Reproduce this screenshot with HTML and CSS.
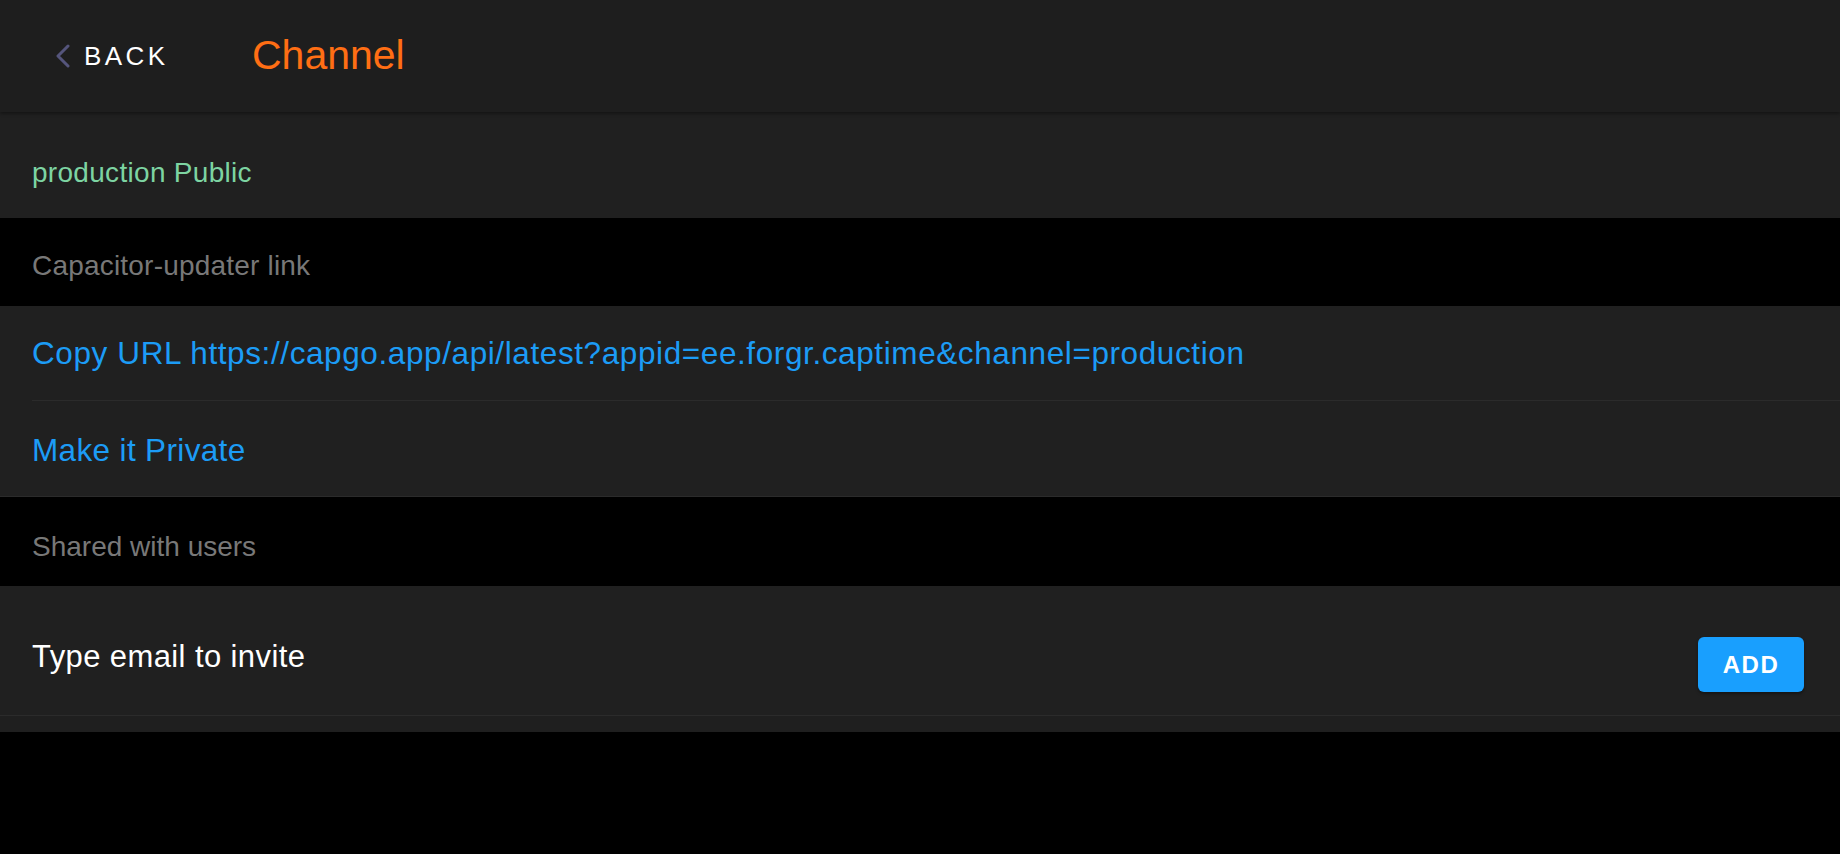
FILE: index.html
```html
<!DOCTYPE html>
<html lang="en">
<head>
<meta charset="utf-8">
<title>Channel</title>
<link rel="stylesheet" href="styles.css">
</head>
<body>
<header class="toolbar">
  <a class="back" href="#">
    <svg class="chev" width="16" height="24" viewBox="0 0 16 24"><path d="M13 2 L3 12 L13 22" fill="none" stroke="#55557c" stroke-width="3" stroke-linecap="round" stroke-linejoin="round"/></svg>
    <span class="back-text">BACK</span>
  </a>
  <h1 class="title">Channel</h1>
</header>
<main class="content">
  <div class="item item-status"><span class="status">production Public</span></div>
  <div class="label">Capacitor-updater link</div>
  <div class="list">
    <div class="item item-link inset"><span class="link link-url">Copy URL https://capgo.app/api/latest?appid=ee.forgr.captime&amp;channel=production</span></div>
    <div class="item item-link item-private full"><span class="link link-private">Make it Private</span></div>
  </div>
  <div class="label label-shared">Shared with users</div>
  <div class="list list-last">
    <div class="item item-input full">
      <span class="placeholder">Type email to invite</span>
      <button class="add">ADD</button>
    </div>
  </div>
</main>
</body>
</html>
```
FILE: styles.css
```css
html, body {
  margin: 0;
  padding: 0;
  background: #000;
  font-family: "Liberation Sans", Arial, sans-serif;
}
.toolbar {
  height: 112px;
  background: #1e1e1e;
  display: flex;
  align-items: center;
  box-shadow: 0 2px 3px rgba(0,0,0,0.35);
  position: relative;
  z-index: 1;
}
.back {
  display: flex;
  align-items: center;
  text-decoration: none;
  margin-left: 55px;
  width: 197px;
}
.chev { display: block; margin-right: 13px; }
.back-text {
  color: #fff;
  font-size: 26px;
  letter-spacing: 3.4px;
}
.title {
  margin: 0;
  color: #ff6e14;
  font-size: 41px;
  font-weight: normal;
  padding-bottom: 1px;
}
.content { background: #000; }
.item {
  background: #202020;
  display: flex;
  align-items: center;
  padding-left: 32px;
  box-sizing: border-box;
}
.item-status {
  height: 106px;
  padding-top: 16px;
}
.status { color: #7dd4a2; font-size: 28px; letter-spacing: 0.3px; }
.label {
  height: 88px;
  display: flex;
  align-items: center;
  padding-left: 32px;
  padding-top: 8px;
  box-sizing: border-box;
  color: #787878;
  font-size: 28px;
  letter-spacing: 0.2px;
}
.label-shared { height: 89px; padding-top: 10px; letter-spacing: 0; }
.list { background: #202020; }
.item-link { height: 95px; }
.item-private { height: 96px; padding-top: 3px; }
.link { color: #1c9cf6; font-size: 31.5px; }
.link-url { letter-spacing: 0.6px; }
.link-private { letter-spacing: 0.35px; }
.inset {
  background: #202020;
  position: relative;
}
.inset::after {
  content: "";
  position: absolute;
  left: 32px;
  right: 0;
  bottom: 0;
  height: 1px;
  background: #2b2b2b;
}
.full { border-bottom: 1px solid #2b2b2b; }
.list-last { padding-bottom: 16px; background: #1f1f1f; }
.item-input {
  height: 130px;
  justify-content: space-between;
  padding-right: 36px;
  padding-top: 12px;
}
.placeholder { color: #fff; font-size: 31px; letter-spacing: 0.4px; margin-top: 2px; margin-bottom: 2px; }
.add {
  width: 106px;
  height: 55px;
  border: none;
  border-radius: 6px;
  background: #199ffe;
  color: #fff;
  font-family: "Liberation Sans", Arial, sans-serif;
  font-weight: bold;
  font-size: 24px;
  letter-spacing: 1.5px;
  box-shadow: 0 2px 3px rgba(0,0,0,0.35);
  padding: 0;
  margin-top: 16px;
}
```
